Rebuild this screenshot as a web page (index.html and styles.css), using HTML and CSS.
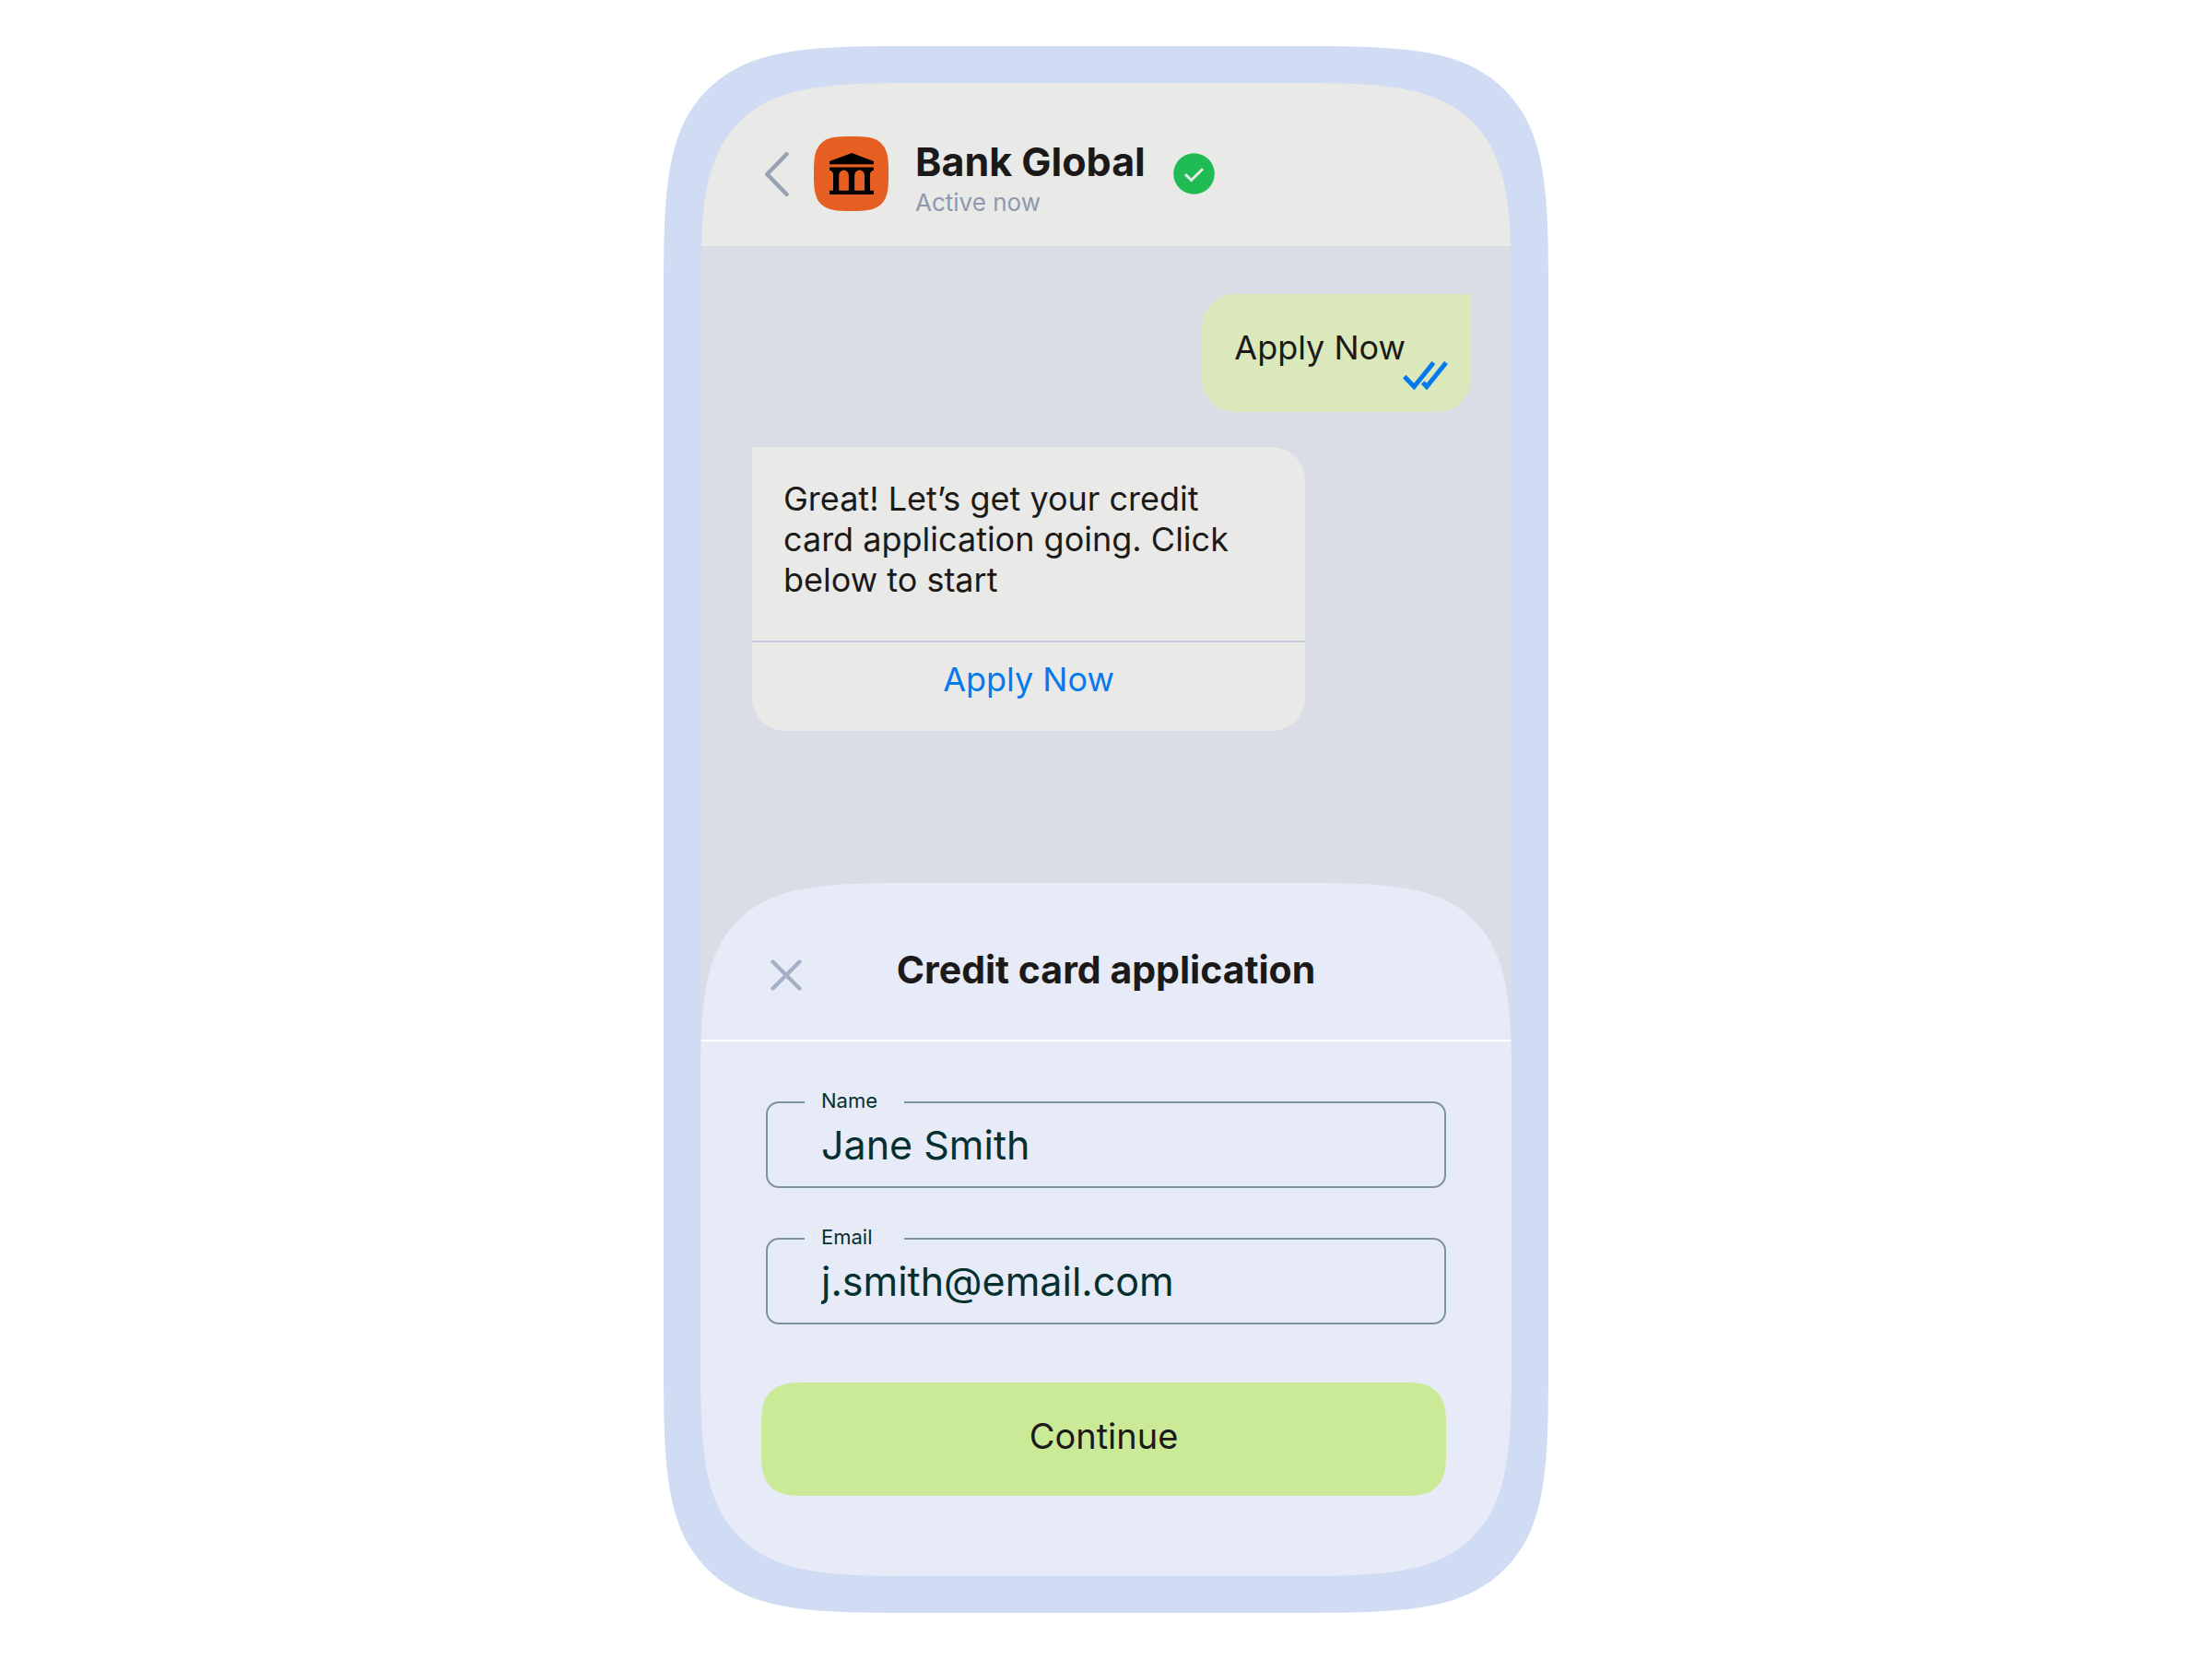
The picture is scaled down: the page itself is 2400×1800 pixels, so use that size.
FILE: index.html
```html
<!DOCTYPE html>
<html lang="en">
<head>
    <meta charset="UTF-8">
    <meta name="viewport" content="width=device-width, initial-scale=1.0">
    <title>Bank Global - Credit card application</title>
    <link rel="stylesheet" href="styles.css">
</head>
<body>
    <div class="phone">
        <div class="screen">
            <header class="chat-header">
                <button type="button" class="icon-button" aria-label="Back">
                    <svg width="26" height="48" viewBox="0 0 26 48" fill="none" stroke="#97a3b3" stroke-width="4.5" stroke-linecap="round" stroke-linejoin="round">
                        <path d="M23.5 2.3L2.3 24l21.2 21.7"/>
                    </svg>
                </button>
                <div class="avatar">
                    <svg width="48" height="45" viewBox="239 99 145 136">
                        <path d="M312 99L384 126V136H239V126Z"/>
                        <path fill-rule="evenodd" d="M239 146H384V156Q374 158 372 168V222H384V235H239V222H251V168Q249 158 239 156ZM270 222H302V172A16 17 0 0 0 270 172ZM321 222H354V172A16.5 17 0 0 0 321 172Z"/>
                    </svg>
                </div>
                <div class="contact">
                    <h1>Bank Global</h1>
                    <p>Active now</p>
                </div>
                <svg class="verified" width="45" height="45" viewBox="0 0 45 45" fill="none">
                    <circle cx="22.5" cy="22.5" r="22.3" fill="#21bb54"/>
                    <path d="M13 23l6.5 6.5L32 17.3" stroke="#e9e9e7" stroke-width="3"/>
                </svg>
            </header>

            <main class="chat">
                <div class="message sent">
                    <p>Apply Now</p>
                    <svg class="ticks" width="49" height="31" viewBox="0 0 49 31" fill="none" stroke="#0679ee" stroke-width="5">
                        <path d="M1.7 16.5L12.300 27.5L33.4 1.5"/>
                        <path d="M21.7 23L26 27.5L47 1.5"/>
                    </svg>
                </div>
                <div class="message received">
                    <p>Great! Let’s get your credit card application going. Click below to start</p>
                    <a href="#application" class="message-link">Apply Now</a>
                </div>
            </main>

            <!-- bottom sheet -->
            <section class="sheet" id="application">
                <div class="sheet-header">
                    <button type="button" class="icon-button" aria-label="Close">
                        <svg width="34" height="34" viewBox="0 0 34 34" fill="none" stroke="#a3b0c6" stroke-width="4.3" stroke-linecap="round">
                            <path d="M2.5 2.5l29 29M31.5 2.5l-29 29"/>
                        </svg>
                    </button>
                    <h2>Credit card application</h2>
                </div>
                <form>
                    <fieldset class="field">
                        <legend><label for="name">Name</label></legend>
                        <input type="text" id="name" value="Jane Smith">
                    </fieldset>
                    <fieldset class="field">
                        <legend><label for="email">Email</label></legend>
                        <input type="email" id="email" value="j.smith@email.com">
                    </fieldset>
                    <button type="button" class="continue">Continue</button>
                </form>
            </section>
        </div>
    </div>
</body>
</html>
```
FILE: styles.css
```css
* {
    margin: 0;
    padding: 0;
    box-sizing: border-box;
}

body {
    font-family: Inter, 'Liberation Sans', sans-serif;
    background: #ffffff;
    color: #1c1a19;
    min-height: 100vh;
    display: flex;
    justify-content: center;
    align-items: center;
}

.phone {
    width: 100%;
    max-width: 960px;
    padding: 40px;
    background: #d0dcf3;
    border-radius: 280px;
    corner-shape: superellipse(1.9);
}

.screen {
    background: #dadde6;
    border-radius: 250px;
    corner-shape: superellipse(1.9);
    overflow: hidden;
}

.icon-button {
    display: flex;
    background: none;
    border: none;
    cursor: pointer;
}

/* chat header */
.chat-header {
    display: flex;
    align-items: center;
    background: #e9e9e7;
    height: 177px;
    padding: 58px 70px 38px;
}

.avatar {
    display: flex;
    align-items: center;
    justify-content: center;
    width: 81px;
    height: 81px;
    margin-left: 27px;
    background: #e65f22;
    border-radius: 40px;
    corner-shape: superellipse(1.7);
}

.contact {
    margin-left: 29px;
    padding-top: 10px;
}

.contact h1 {
    font-size: 43px;
    line-height: 48px;
    font-weight: 700;
}

.contact p {
    margin-top: 5px;
    font-size: 26px;
    line-height: 32px;
    font-weight: 400;
    color: #8c99ae;
}

.verified {
    margin-left: 30px;
}

/* messages */
.chat {
    display: flex;
    flex-direction: column;
    gap: 38px;
    min-height: 691px;
    padding: 52px 44px 52px 56px;
}

.message {
    font-size: 36px;
    line-height: 44px;
    border-radius: 36px;
}

.sent {
    display: flex;
    align-self: flex-end;
    padding: 36px 25px 24px 35px;
    background: #dae8bc;
    border-top-right-radius: 0;
}

.sent p {
    padding-bottom: 24px;
}

/* the ticks tuck in under the end of the text */
.ticks {
    align-self: flex-end;
    margin-left: -3px;
}

.received {
    align-self: flex-start;
    width: 100%;
    max-width: 600px;
    background: #e9e9e7;
    border-top-left-radius: 0;
}

.received p {
    padding: 34px 60px 44px 34px;
}

.message-link {
    display: block;
    padding: 18px 34px 34px;
    border-top: 2px solid #c0cadf;
    color: #0679ee;
    text-align: center;
    text-decoration: none;
}

/* application sheet */
.sheet {
    background: #e7ebf7;
    border-radius: 240px 240px 0 0;
    corner-shape: superellipse(1.9);
    overflow: hidden;
}

.sheet-header {
    display: grid;
    grid-template-columns: 34px 1fr 34px;
    align-items: end;
    padding: 71px 76px 53px;
    border-bottom: 2px solid #ffffff;
}

.sheet-header h2 {
    font-size: 41px;
    line-height: 46px;
    font-weight: 700;
    text-align: center;
}

form {
    display: flex;
    flex-direction: column;
    padding: 54px 71px 87px;
}

.field {
    height: 105px;
    margin-bottom: 43px;
    border: 2px solid #7b9498;
    border-radius: 14px;
    color: #06302f;
}

.field legend {
    width: 108px;
    height: 24px;
    margin-left: 40px;
    padding-left: 18px;
    font-size: 22px;
    line-height: 20px;
}

.field input {
    display: block;
    width: 100%;
    height: 68px;
    padding: 0 58px;
    border: none;
    outline: none;
    background: none;
    font-family: inherit;
    font-size: 43px;
    color: inherit;
}

.continue {
    height: 123px;
    margin: 20px 0 0 -5px;
    padding-bottom: 8px;
    background: #cbea98;
    border: none;
    border-radius: 46px;
    corner-shape: superellipse(1.5);
    font-family: inherit;
    font-size: 38px;
    color: inherit;
    cursor: pointer;
}
```
